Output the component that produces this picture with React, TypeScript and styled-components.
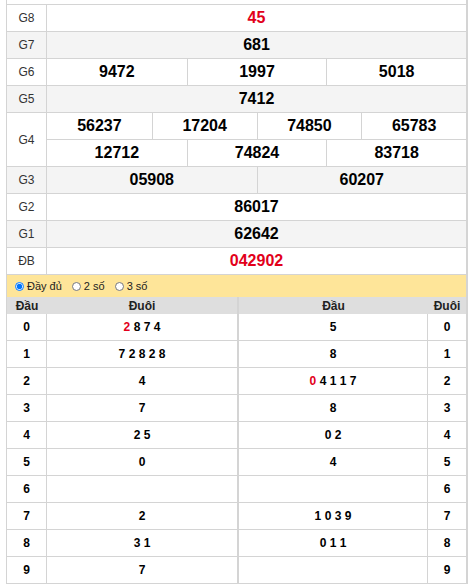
import React from "react";
import styled, { createGlobalStyle } from "styled-components";

const GlobalStyle = createGlobalStyle`
  html, body { margin: 0; padding: 0; background: #fff; }
  body { font-family: "Liberation Sans", Arial, sans-serif; color: #000; }
`;

const BORDER = "#d4d4d4";
const RED = "#e2001a";

const Page = styled.div`
  padding-left: 6px;
  width: 462px;
`;

const Board = styled.div`
  border-left: 1px solid ${BORDER};
  border-right: 2px solid ${BORDER};
`;

const TopStub = styled.div`
  height: 4px;
  border-bottom: 1px solid ${BORDER};
`;

const PrizeRow = styled.div<{ $alt?: boolean }>`
  display: grid;
  grid-template-columns: 40px 1fr;
  background: ${(p) => (p.$alt ? "#f4f4f4" : "#fff")};
  border-bottom: 1px solid ${BORDER};
`;

const Label = styled.div`
  box-sizing: border-box;
  border-right: 1px solid ${BORDER};
  display: flex;
  align-items: center;
  justify-content: center;
  font-size: 12px;
  color: #333;
`;

const Values = styled.div`
  display: flex;
  flex-direction: column;
`;

const Line = styled.div<{ $cols: number }>`
  display: grid;
  grid-template-columns: repeat(${(p) => p.$cols}, 1fr);
  height: 26px;
  & + & { border-top: 1px solid ${BORDER}; }
`;

const Num = styled.div<{ $red?: boolean }>`
  display: flex;
  align-items: center;
  justify-content: center;
  font-size: 16px;
  font-weight: bold;
  color: ${(p) => (p.$red ? RED : "#000")};
  & + & { border-left: 1px solid ${BORDER}; }
`;

const Options = styled.div`
  height: 22px;
  background: #fee599;
  display: flex;
  align-items: center;
  font-size: 11px;
  color: #222;
`;

const Option = styled.label`
  display: flex;
  align-items: center;
  margin-right: 2px;
`;

const Radio = styled.input`
  width: 9px;
  height: 9px;
  margin: 0 3px 0 8px;
`;

const Loto = styled.div`
  display: grid;
  grid-template-columns: 231px 1fr;
`;

const LotoTable = styled.div<{ $side: "left" | "right" }>`
  display: grid;
  grid-template-columns: ${(p) => (p.$side === "left" ? "40px 1fr" : "1fr 38px")};
  ${(p) =>
    p.$side === "left"
      ? `border-right: 1px solid ${BORDER};`
      : `border-left: 1px solid ${BORDER};`}
`;

const Head = styled.div`
  height: 17px;
  background: #dedede;
  display: flex;
  align-items: center;
  justify-content: center;
  font-size: 12px;
  font-weight: bold;
  color: #222;
`;

const Cell = styled.div<{ $sep?: boolean }>`
  box-sizing: border-box;
  height: 27px;
  border-bottom: 1px solid ${BORDER};
  ${(p) => (p.$sep ? `border-right: 1px solid ${BORDER};` : "")}
  display: flex;
  align-items: center;
  justify-content: center;
  font-size: 12px;
  font-weight: bold;
  color: #000;
`;

const DigitText = styled.span`
  white-space: pre;
`;

const Red = styled.span`
  color: ${RED};
`;

type Prize = { label: string; lines: string[][]; alt?: boolean; red?: boolean };

const prizes: Prize[] = [
  { label: "G8", lines: [["45"]], red: true },
  { label: "G7", lines: [["681"]], alt: true },
  { label: "G6", lines: [["9472", "1997", "5018"]] },
  { label: "G5", lines: [["7412"]], alt: true },
  {
    label: "G4",
    lines: [
      ["56237", "17204", "74850", "65783"],
      ["12712", "74824", "83718"],
    ],
  },
  { label: "G3", lines: [["05908", "60207"]], alt: true },
  { label: "G2", lines: [["86017"]] },
  { label: "G1", lines: [["62642"]], alt: true },
  { label: "ĐB", lines: [["042902"]], red: true },
];

type LotoItem = { digits: string[]; red?: number };

const duoi: LotoItem[] = [
  { digits: ["2", "8", "7", "4"], red: 0 },
  { digits: ["7", "2", "8", "2", "8"] },
  { digits: ["4"] },
  { digits: ["7"] },
  { digits: ["2", "5"] },
  { digits: ["0"] },
  { digits: [] },
  { digits: ["2"] },
  { digits: ["3", "1"] },
  { digits: ["7"] },
];

const dau: LotoItem[] = [
  { digits: ["5"] },
  { digits: ["8"] },
  { digits: ["0", "4", "1", "1", "7"], red: 0 },
  { digits: ["8"] },
  { digits: ["0", "2"] },
  { digits: ["4"] },
  { digits: [] },
  { digits: ["1", "0", "3", "9"] },
  { digits: ["0", "1", "1"] },
  { digits: [] },
];

function Digits({ item }: { item: LotoItem }) {
  return (
    <DigitText>
      {item.digits.map((d, i) => (
        <React.Fragment key={i}>
          {i > 0 ? " " : ""}
          {item.red === i ? <Red>{d}</Red> : d}
        </React.Fragment>
      ))}
    </DigitText>
  );
}

export default function App() {
  return (
    <Page>
      <GlobalStyle />
      <Board>
        <TopStub />
        {prizes.map((p) => (
          <PrizeRow key={p.label} $alt={p.alt}>
            <Label>{p.label}</Label>
            <Values>
              {p.lines.map((line, li) => (
                <Line key={li} $cols={line.length}>
                  {line.map((n, ni) => (
                    <Num key={ni} $red={p.red}>
                      {n}
                    </Num>
                  ))}
                </Line>
              ))}
            </Values>
          </PrizeRow>
        ))}
        <Options>
          <Option>
            <Radio type="radio" name="mode" defaultChecked />
            Đầy đủ
          </Option>
          <Option>
            <Radio type="radio" name="mode" />2 số
          </Option>
          <Option>
            <Radio type="radio" name="mode" />3 số
          </Option>
        </Options>
        <Loto>
          <LotoTable $side="left">
            <Head>Đầu</Head>
            <Head>Đuôi</Head>
            {duoi.map((item, i) => (
              <React.Fragment key={i}>
                <Cell $sep>{i}</Cell>
                <Cell>
                  <Digits item={item} />
                </Cell>
              </React.Fragment>
            ))}
          </LotoTable>
          <LotoTable $side="right">
            <Head>Đầu</Head>
            <Head>Đuôi</Head>
            {dau.map((item, i) => (
              <React.Fragment key={i}>
                <Cell $sep>
                  <Digits item={item} />
                </Cell>
                <Cell>{i}</Cell>
              </React.Fragment>
            ))}
          </LotoTable>
        </Loto>
      </Board>
    </Page>
  );
}
